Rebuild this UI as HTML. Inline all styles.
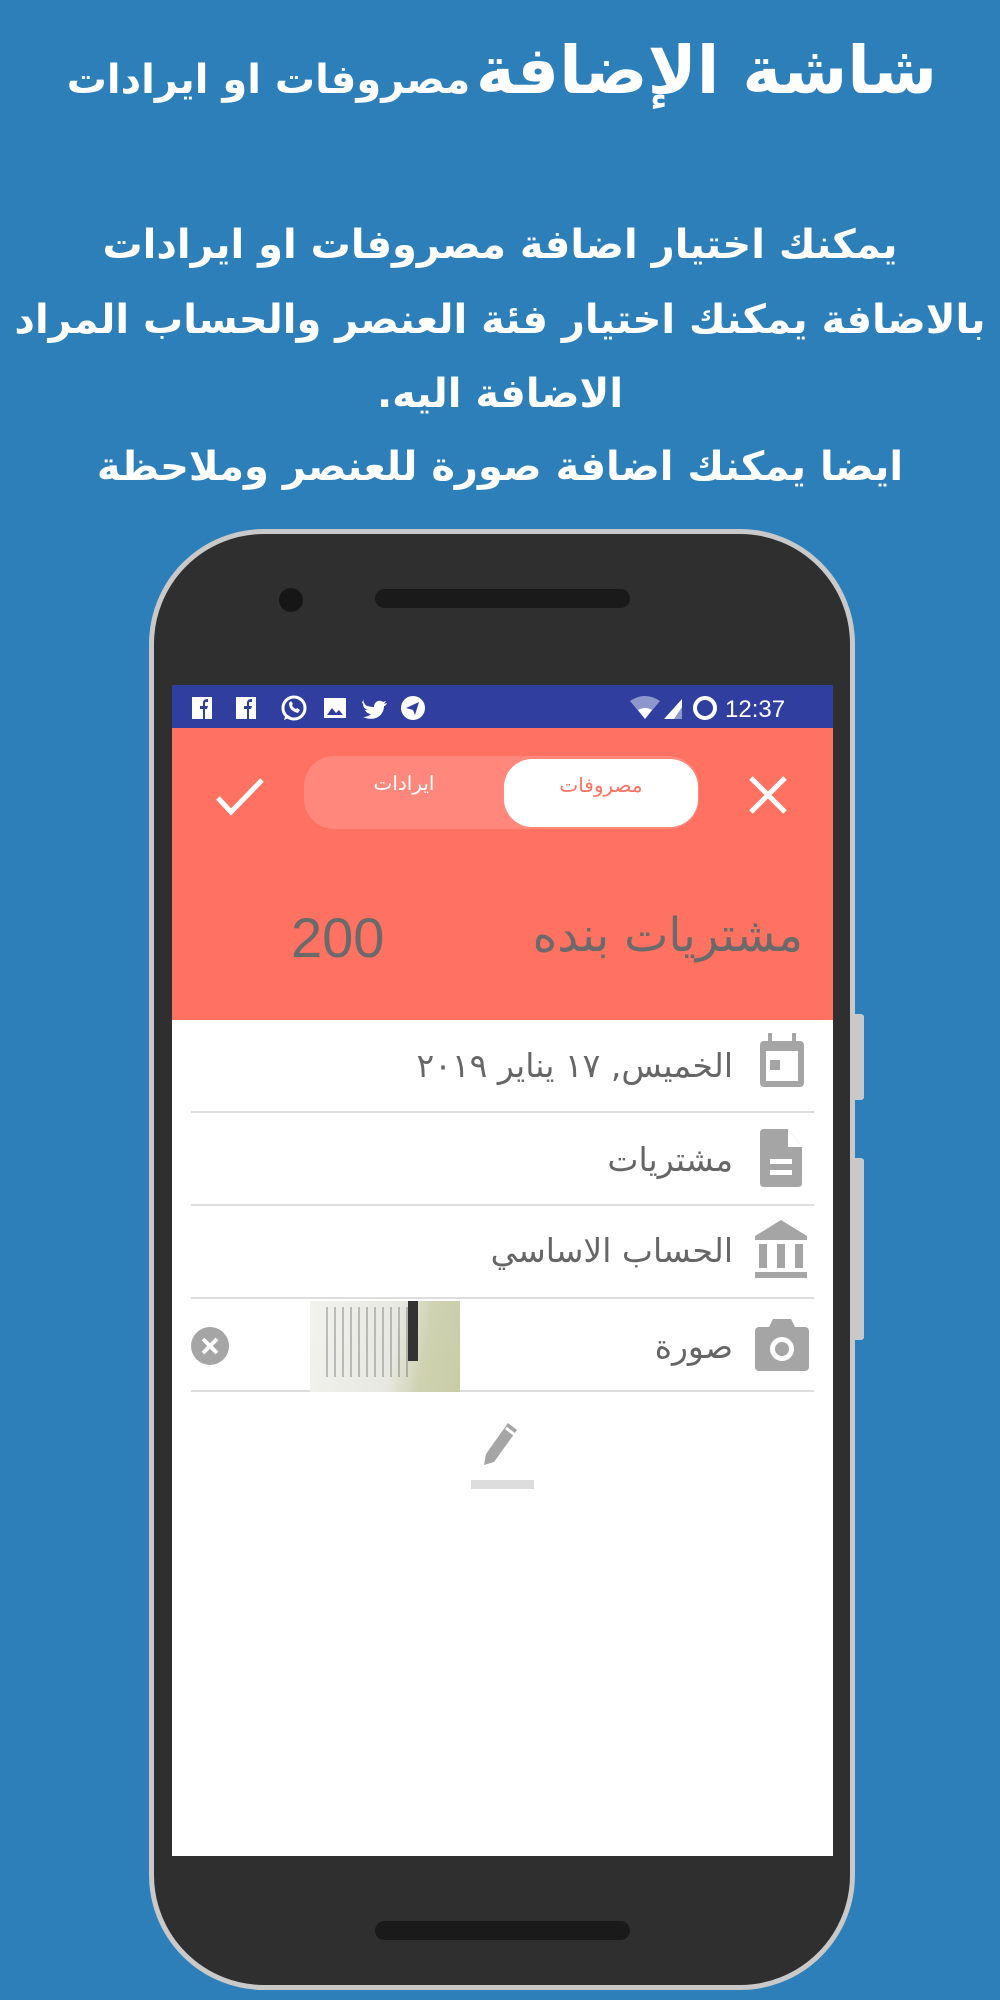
<!DOCTYPE html>
<html><head><meta charset="utf-8">
<style>
*{margin:0;padding:0;box-sizing:border-box}
body{width:1000px;height:2000px;background:#2c7fb8;position:relative;overflow:hidden;font-family:"DejaVu Sans","Liberation Sans",sans-serif;color:#fff}
.abs{position:absolute}
.title{left:0;right:63px;top:32px;text-align:right;direction:rtl;white-space:nowrap;font-weight:bold}
.title .big{font-size:66px}
.title .sm{font-size:40px}
.p{left:0;width:1000px;text-align:center;direction:rtl;white-space:nowrap;font-weight:bold;font-size:40px}
.phone{left:149px;top:529px;width:706px;height:1461px;background:#2f2f2f;border:5px solid #c9c9c9;border-radius:115px}
.screen{left:172px;top:685px;width:661px;height:1171px;background:#fff;overflow:hidden}
.row{position:absolute;left:19px;width:623px;border-bottom:2px solid #ddd;height:93px}
.rt{position:absolute;right:81px;direction:rtl;white-space:nowrap;font-size:33px;color:#666}
.ic{position:absolute;right:7px}
</style></head><body>
<div class="abs title"><span class="big">شاشة الإضافة</span> <span class="sm">مصروفات او ايرادات</span></div>
<div class="abs p" style="top:222px">يمكنك اختيار اضافة مصروفات او ايرادات</div>
<div class="abs p" style="top:297px">بالاضافة يمكنك اختيار فئة العنصر والحساب المراد</div>
<div class="abs p" style="top:371px">الاضافة اليه.</div>
<div class="abs p" style="top:444px">ايضا يمكنك اضافة صورة للعنصر وملاحظة</div>

<div class="abs" style="left:852px;top:1014px;width:12px;height:86px;background:#c9c9c9;border-radius:0 3px 3px 0"></div>
<div class="abs" style="left:852px;top:1158px;width:12px;height:182px;background:#c9c9c9;border-radius:0 3px 3px 0"></div>
<div class="abs phone"></div>
<div class="abs" style="left:279px;top:588px;width:24px;height:24px;border-radius:50%;background:#161616"></div>
<div class="abs" style="left:375px;top:589px;width:255px;height:19px;border-radius:10px;background:#1a1a1a"></div>
<div class="abs" style="left:375px;top:1921px;width:255px;height:19px;border-radius:10px;background:#1a1a1a"></div>

<div class="abs screen">
  <div class="abs" style="left:0;top:0;width:661px;height:43px;background:#303f9f"></div>
  <svg class="abs" style="left:18px;top:10px" width="240" height="26" viewBox="0 0 240 26" fill="#fff">
    <rect x="2" y="2" width="20" height="22"/><path d="M13 24V14h-3v-3h3V8c0-3 2-4 5-4v3h-2c-1 0-1 1-1 1v3h3l-1 3h-2v10z" fill="#303f9f"/>
    <rect x="46" y="2" width="20" height="22"/><path d="M57 24V14h-3v-3h3V8c0-3 2-4 5-4v3h-2c-1 0-1 1-1 1v3h3l-1 3h-2v10z" fill="#303f9f"/>
    <circle cx="104" cy="13" r="11" fill="none" stroke="#fff" stroke-width="3"/><path d="M94 25l2-6 5 3z"/><path d="M99 8q0 8 9 10l2-3-3-2-1 1q-3-1-4-4l1-1-2-3z"/>
    <rect x="134" y="3" width="22" height="20"/><path d="M137 20l5-7 4 5 3-3 4 5z" fill="#303f9f"/>
    <path d="M172 8c4 3 8 4 12 4 0-5 5-8 9-5l3-1-2 3 3-1c-1 2-2 3-3 3 0 10-10 16-21 11 3 0 6-1 8-3-3 0-5-2-6-4h3c-3-1-5-3-5-6l3 1c-3-2-3-5-2-7z"/>
    <circle cx="223" cy="13" r="12"/><path d="M216 13l13-6-4 13-2-5z" fill="#303f9f"/>
  </svg>
  <svg class="abs" style="left:458px;top:8px" width="200" height="30" viewBox="0 0 200 30">
    <path d="M0 8q15-10 30 0l-15 18z" fill="#8e97cc"/><path d="M8 17q7-4 14 0l-7 9z" fill="#fff"/>
    <path d="M34 26L52 6v20z" fill="#fff"/><path d="M44 26h8V14z" fill="#8e97cc"/>
    <circle cx="75" cy="15" r="10" fill="none" stroke="#fff" stroke-width="4"/>
    <text x="95" y="24" font-family="Liberation Sans" font-size="24" fill="#fff">12:37</text>
  </svg>
  <div class="abs" style="left:0;top:43px;width:661px;height:292px;background:#ff7161"></div>
  <svg class="abs" style="left:42px;top:91px" width="52" height="40" viewBox="0 0 52 40"><path d="M4 22l13 14L48 4" fill="none" stroke="#fff" stroke-width="5"/></svg>
  <svg class="abs" style="left:576px;top:90px" width="40" height="40" viewBox="0 0 40 40"><path d="M3 3l34 34M37 3L3 37" stroke="#fff" stroke-width="5"/></svg>
  <div class="abs" style="left:132px;top:71px;width:395px;height:73px;border-radius:30px;background:#ff877c"></div>
  <div class="abs" style="left:332px;top:74px;width:194px;height:68px;border-radius:28px;background:#fff"></div>
  <div class="abs" style="left:332px;top:88px;width:194px;text-align:center;font-size:20px;color:#ff7161;direction:rtl">مصروفات</div>
  <div class="abs" style="left:132px;top:86px;width:200px;text-align:center;font-size:20px;color:#fff;direction:rtl">ايرادات</div>
  <div class="abs" style="left:119px;top:220px;font-family:'Liberation Sans',sans-serif;font-size:56px;color:#6a6a6a">200</div>
  <div class="abs" style="right:30px;top:223px;font-size:47px;color:#6a6a6a;direction:rtl;white-space:nowrap">مشتريات بنده</div>

  <div class="row" style="top:335px"><div class="rt" style="top:26px">الخميس, ١٧ يناير ٢٠١٩</div>
    <svg class="ic" style="top:13px" width="50" height="56" viewBox="0 0 50 56"><rect x="3" y="8" width="44" height="46" rx="4" fill="#a5a5a5"/><rect x="9" y="18" width="32" height="30" fill="#fff"/><rect x="11" y="0" width="4" height="10" fill="#a5a5a5"/><rect x="35" y="0" width="4" height="10" fill="#a5a5a5"/><rect x="13" y="27" width="10" height="10" fill="#a5a5a5"/></svg></div>
  <div class="row" style="top:428px"><div class="rt" style="top:27px">مشتريات</div>
    <svg class="ic" style="top:16px;right:10px" width="46" height="58" viewBox="0 0 46 58"><path d="M4 0h26l14 18v36q0 4-4 4H6q-4 0-4-4V4q0-4 4-4z" fill="#a5a5a5"/><path d="M30 0v18h14" fill="#fff"/><rect x="12" y="30" width="22" height="5" fill="#fff"/><rect x="12" y="41" width="22" height="5" fill="#fff"/></svg></div>
  <div class="row" style="top:521px"><div class="rt" style="top:25px">الحساب الاساسي</div>
    <svg class="ic" style="top:14px" width="52" height="58" viewBox="0 0 52 58"><path d="M26 0L52 16v4H0v-4z" fill="#a5a5a5"/><rect x="4" y="24" width="8" height="24" fill="#a5a5a5"/><rect x="22" y="24" width="8" height="24" fill="#a5a5a5"/><rect x="40" y="24" width="8" height="24" fill="#a5a5a5"/><rect x="0" y="52" width="52" height="6" fill="#a5a5a5"/></svg></div>
  <div class="row" style="top:614px"><div class="rt" style="top:28px">صورة</div>
    <svg class="ic" style="top:20px;right:5px" width="54" height="52" viewBox="0 0 54 52"><rect x="0" y="8" width="54" height="44" rx="4" fill="#a5a5a5"/><path d="M14 8l4-8h18l4 8z" fill="#a5a5a5"/><circle cx="27" cy="30" r="12" fill="#fff"/><circle cx="27" cy="30" r="7" fill="#a5a5a5"/></svg>
    <div class="abs" style="left:119px;top:2px;width:150px;height:91px;background:linear-gradient(100deg,#f2f2ee 0%,#e8e8e2 55%,#cfd2b0 75%,#c8cca6 100%)">
      <div class="abs" style="left:10px;top:6px;width:90px;height:70px;background:repeating-linear-gradient(90deg,transparent 0 6px,rgba(90,90,90,.35) 6px 8px)"></div>
      <div class="abs" style="left:98px;top:0;width:10px;height:60px;background:#333"></div>
    </div>
    <svg class="abs" style="left:0;top:28px" width="38" height="38" viewBox="0 0 38 38"><circle cx="19" cy="19" r="19" fill="#a5a5a5"/><path d="M12 12l14 14M26 12L12 26" stroke="#fff" stroke-width="4"/></svg>
  </div>
  <svg class="abs" style="left:304px;top:734px" width="50" height="48" viewBox="0 0 50 48"><path d="M8 46l2-11L32 4l9 7-23 32z" fill="#a5a5a5"/><path d="M30 9l9 7" stroke="#fff" stroke-width="3"/></svg>
  <div class="abs" style="left:299px;top:795px;width:63px;height:9px;background:#ddd"></div>
</div>
</body></html>
